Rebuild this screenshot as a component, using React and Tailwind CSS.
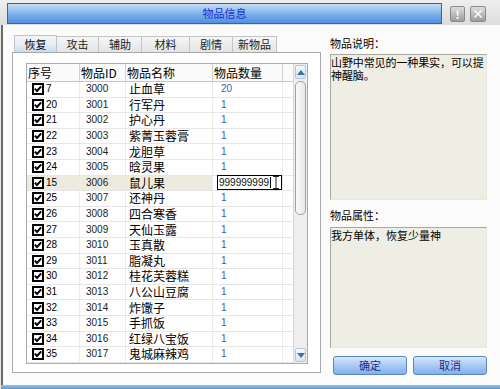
import React from 'react';

const rows = [
  [7, 3000, '止血草', '20'],
  [20, 3001, '行军丹', '1'],
  [21, 3002, '护心丹', '1'],
  [22, 3003, '紫菁玉蓉膏', '1'],
  [23, 3004, '龙胆草', '1'],
  [24, 3005, '晗灵果', '1'],
  [15, 3006, '鼠儿果', null],
  [25, 3007, '还神丹', '1'],
  [26, 3008, '四合寒香', '1'],
  [27, 3009, '天仙玉露', '1'],
  [28, 3010, '玉真散', '1'],
  [29, 3011, '脂凝丸', '1'],
  [30, 3012, '桂花芙蓉糕', '1'],
  [31, 3013, '八公山豆腐', '1'],
  [32, 3014, '炸馓子', '1'],
  [33, 3015, '手抓饭', '1'],
  [34, 3016, '红绿八宝饭', '1'],
  [35, 3017, '鬼城麻辣鸡', '1'],
];

const tabs = [
  ['恢复', 'w-[43px]'],
  ['攻击', 'w-[42px]'],
  ['辅助', 'w-[43px]'],
  ['材料', 'w-[48px]'],
  ['剧情', 'w-[43px]'],
  ['新物品', 'w-[44px]'],
];

const Check = () => (
  <svg width="12" height="12" viewBox="0 0 12 12" className="shrink-0">
    <rect x="1" y="1" width="10" height="10" fill="#fff" stroke="#000" strokeWidth="2" />
    <path d="M2.8 5.6 L5 8 L9.2 3.4" fill="none" stroke="#000" strokeWidth="2" />
  </svg>
);

const Arrow = ({ down }) => (
  <svg width="8" height="5" viewBox="0 0 8 5">
    <path d={down ? 'M0 0 H8 L4 5 Z' : 'M0 5 H8 L4 0 Z'} fill="#3c6fb0" />
  </svg>
);

const num = "font-['Liberation_Sans','Noto_Sans_CJK_SC',sans-serif] text-[10px]";

const App = () => {
  return (
    <div className="w-[500px] h-[389px] overflow-hidden bg-[#e6e6e6] font-['Noto_Sans_CJK_SC',sans-serif] text-[11px] text-black">
      {/* title strip */}
      <div className="h-[25px] flex items-start bg-gradient-to-b from-[#efefef] to-[#dcdcdc]">
        <div className="ml-[7px] mt-[3px] w-[435px] h-[21px] border border-[#3563a8] bg-gradient-to-b from-[#c6def6] via-[#80b4ec] to-[#4f90de] flex items-center justify-center text-[#1b2fd2] leading-none">
          物品信息
        </div>
        <div className="ml-[8px] mt-[6px] flex gap-[5px]">
          <div className="w-[15px] h-[16px] rounded-[2px] border border-[#8a8a8a] bg-gradient-to-b from-[#dedede] to-[#9d9d9d] flex items-center justify-center text-white text-[11px] font-bold leading-none">!</div>
          <div className="w-[16px] h-[16px] rounded-[2px] border border-[#8a8a8a] bg-gradient-to-b from-[#dedede] to-[#9d9d9d] flex items-center justify-center text-white text-[12px] font-bold leading-none">×</div>
        </div>
      </div>

      {/* body */}
      <div className="h-[360px] ml-[1px] border-l-2 border-[#6b6b6b] bg-[#fbfbfb] flex pl-[9px] pt-[11px]">
        {/* left: tabs + grid */}
        <div className="w-[309px] flex flex-col">
          <div className="h-[16px] flex pl-[2px] items-end">
            {tabs.map(([t, w], i) => (
              <div
                key={t}
                className={
                  i === 0
                    ? `${w} h-[17px] border border-b-0 border-[#b8c4d0] bg-gradient-to-b from-[#f4f4f4] via-[#e8eef4] to-[#c9ddf0] flex items-center justify-center leading-none`
                    : `${w} h-[16px] border-t border-r border-[#c4c4c4] bg-gradient-to-b from-[#f6f6f6] to-[#e4e4e4] flex items-center justify-center leading-none text-[#222]`
                }
              >
                {t}
              </div>
            ))}
          </div>
          <div className="h-[321px] border border-[#a9a9a9] bg-white pl-[13px] pt-[10px]">
            <div className="w-[282px] h-[301px] border border-[#a4acb4] flex">
              <div className="w-[266px] flex flex-col">
                {/* header */}
                <div className="h-[18px] flex border-b border-[#c6c6c6] bg-[#fafafa] text-[12px] leading-none">
                  <div className="w-[53px] flex items-center pl-[1px] border-r border-[#d0d0d0]">序号</div>
                  <div className="w-[46px] flex items-center pl-[1px] border-r border-[#d0d0d0]">物品ID</div>
                  <div className="w-[87px] flex items-center pl-[1px] border-r border-[#d0d0d0]">物品名称</div>
                  <div className="w-[70px] flex items-center pl-[1px] border-r border-[#d0d0d0]">物品数量</div>
                  <div className="w-[10px]" />
                </div>
                {rows.map(([n, id, name, qty]) => {
                  const sel = qty === null;
                  return (
                    <div key={id} className="h-[15.6px] flex border-b border-[#e6e6e6] leading-none">
                      <div className={`w-[53px] flex items-center gap-[2px] pl-[5px] border-r border-[#ececec] ${num} ${sel ? 'bg-[#ecebdf]' : ''}`}>
                        <Check />
                        <span>{n}</span>
                      </div>
                      <div className={`w-[46px] flex items-center pl-[6px] border-r border-[#ececec] text-[#222] ${num} ${sel ? 'bg-[#ecebdf]' : ''}`}>{id}</div>
                      <div className={`w-[87px] flex items-center pl-[3px] border-r border-[#ececec] text-[12px] ${sel ? 'bg-[#ecebdf]' : ''}`}>{name}</div>
                      <div className="w-[70px] flex items-center border-r border-[#ececec]">
                        {sel ? (
                          <div className={`ml-[4px] w-[66px] h-[15px] border border-black bg-white flex items-center pl-[1px] ${num} text-[#111]`}>
                            <span>999999999</span>
                            <span className="w-[1px] h-[11px] bg-black ml-[1px]" />
                            <svg width="6" height="13" viewBox="0 0 6 13" className="ml-[2px]">
                              <path d="M0 0.5 H6 M3 0.5 V12.5 M0 12.5 H6" stroke="#222" strokeWidth="1" fill="none" />
                            </svg>
                          </div>
                        ) : (
                          <span className={`pl-[8px] text-[#3a64a6] ${num}`}>{qty}</span>
                        )}
                      </div>
                      <div className="w-[10px]" />
                    </div>
                  );
                })}
              </div>
              {/* scrollbar */}
              <div className="w-[14px] flex flex-col bg-[#eeeeee] border-l border-[#d6d6d6]">
                <div className="h-[14px] m-[1px] rounded-[2px] border border-[#b4c6da] bg-gradient-to-b from-[#f4f8fc] to-[#d6e4f2] flex items-center justify-center">
                  <Arrow />
                </div>
                <div className="h-[134px] mx-[1px] mt-[1px] rounded-[5px] border border-[#9aa4ae] bg-gradient-to-r from-[#fafafa] to-[#e8e8e8]" />
                <div className="flex-1" />
                <div className="h-[14px] m-[1px] rounded-[2px] border border-[#b4c6da] bg-gradient-to-b from-[#f4f8fc] to-[#d6e4f2] flex items-center justify-center">
                  <Arrow down />
                </div>
              </div>
            </div>
          </div>
        </div>

        {/* right: description */}
        <div className="w-[158px] ml-[9px] flex flex-col">
          <div className="h-[18px] leading-[14px]">物品说明：</div>
          <div className="h-[146px] w-[157px] border-t border-l border-[#a8a8a0] border-r border-b border-r-[#e8e8e0] border-b-[#e8e8e0] bg-[#efeee5] pt-[1px] leading-[13px] tracking-[-0.1px] break-all">
            山野中常见的一种果实，可以提神醒脑。
          </div>
          <div className="h-[27px] pt-[8px] leading-[14px]">物品属性：</div>
          <div className="h-[121px] w-[157px] border-t border-l border-[#a8a8a0] border-r border-b border-r-[#e8e8e0] border-b-[#e8e8e0] bg-[#efeee5] pt-[1px] leading-[13px]">
            我方单体，恢复少量神
          </div>
          <div className="mt-[8px] flex gap-[6px] pl-[3px]">
            <button className="w-[74px] h-[19px] rounded-[3px] border border-[#5a86c0] bg-gradient-to-b from-[#d5e7fb] via-[#a9cbf3] to-[#7fb0ea] text-[#1a2f86] text-[11px] leading-none">确定</button>
            <button className="w-[74px] h-[19px] rounded-[3px] border border-[#5a86c0] bg-gradient-to-b from-[#d5e7fb] via-[#a9cbf3] to-[#7fb0ea] text-[#1a2f86] text-[11px] leading-none">取消</button>
          </div>
        </div>
      </div>

      {/* bottom border */}
      <div className="h-[4px] ml-[1px] border-t border-[#9ab8dc] bg-gradient-to-b from-[#8fb8e8] to-[#5c94d8]" />
    </div>
  );
};

export default App;
